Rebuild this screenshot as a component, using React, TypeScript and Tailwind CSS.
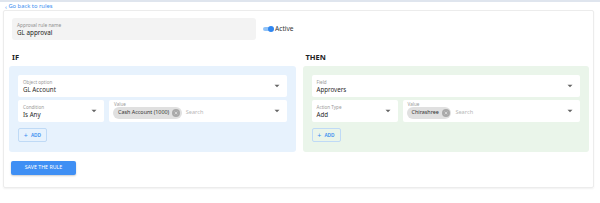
import React from "react";

const font = { fontFamily: '"Noto Sans", "Open Sans", sans-serif' };

function Chevron() {
  return (
    <svg width="6" height="4" viewBox="0 0 6 4" className="shrink-0">
      <path d="M0.5 0.8 L3 3.3 L5.5 0.8 Z" fill="#666" />
    </svg>
  );
}

function Field({ label, value, className }: { label: string; value: React.ReactNode; className?: string }) {
  return (
    <div className={"h-[22px] bg-white rounded-[2px] flex items-center pl-[5px] pr-[7px] " + (className || "")}>
      <div className="flex-1 flex flex-col justify-center min-w-0">
        <div className="text-[4.6px] leading-[6px] text-[#9a9a9a]">{label}</div>
        <div className="text-[6.2px] leading-[9px] text-[#2a2a2a]">{value}</div>
      </div>
      <Chevron />
    </div>
  );
}

function Chip({ text }: { text: string }) {
  return (
    <div className="h-[12px] rounded-full bg-[#e0e0e0] flex items-center pl-[5px] pr-[1.5px] gap-[3px]">
      <span className="text-[5.4px] text-[#333] leading-none whitespace-nowrap">{text}</span>
      <span className="w-[8px] h-[8px] rounded-full bg-[#a9a9a9] flex items-center justify-center">
        <svg width="4" height="4" viewBox="0 0 4 4">
          <path d="M0.7 0.7 L3.3 3.3 M3.3 0.7 L0.7 3.3" stroke="#e0e0e0" strokeWidth="0.8" />
        </svg>
      </span>
    </div>
  );
}

function ChipField({ chip }: { chip: string }) {
  return (
    <div className="flex-1 h-[22px] bg-white rounded-[2px] flex items-center pl-[4px] pr-[7px]">
      <div className="flex-1 flex flex-col justify-center min-w-0">
        <div className="text-[4.6px] leading-[5px] text-[#9a9a9a] pl-[1px] mt-[-1px]">Value</div>
        <div className="flex items-center gap-[4px]">
          <Chip text={chip} />
          <span className="text-[5.6px] text-[#b8b8b8] leading-none">Search</span>
        </div>
      </div>
      <Chevron />
    </div>
  );
}

function AddBtn() {
  return (
    <div className="w-[29px] h-[14px] border border-[#bfdaf6] rounded-[2px] flex items-center justify-center gap-[3px] text-[#3a8ef0]">
      <span className="text-[7px] leading-none">+</span>
      <span className="text-[4.8px] leading-none font-semibold">ADD</span>
    </div>
  );
}

function Panel({
  bg,
  top,
  left,
  chip,
}: {
  bg: string;
  top: [string, string];
  left: [string, string];
  chip: string;
}) {
  return (
    <div className={"h-[86px] rounded-[3px] pt-[9px] px-[9px] flex flex-col " + bg}>
      <Field label={top[0]} value={top[1]} />
      <div className="flex gap-[5px] mt-[3px]">
        <Field label={left[0]} value={left[1]} className="w-[86px]" />
        <ChipField chip={chip} />
      </div>
      <div className="mt-[6px]">
        <AddBtn />
      </div>
    </div>
  );
}

export default function App() {
  return (
    <div style={font} className="w-[600px] h-[203px] bg-white relative overflow-hidden">
      <div className="h-[1.5px] bg-[#dfe5ee]" />
      <div className="flex items-center pl-[5px] h-[7px] mt-[1.5px] text-[#3d8ef0] text-[5.8px] leading-none">
        <span className="mr-[1.5px] text-[6px]">‹</span>
        <span>Go back to rules</span>
      </div>
      <div className="ml-[3px] mt-[0px] w-[591px] h-[178px] border border-[#ececec] rounded-[2px] shadow-[0_1px_2px_rgba(0,0,0,0.06)] pt-[7px] pl-[5px] pr-[4px]">
        <div className="flex items-center">
          <div className="ml-[3px] w-[244px] h-[22px] bg-[#f3f3f3] rounded-[3px] pl-[5px] flex flex-col justify-center">
            <div className="text-[4.8px] leading-[6px] text-[#8f8f8f]">Approval rule name</div>
            <div className="text-[6.3px] leading-[9px] text-[#222]">GL approval</div>
          </div>
          <div className="ml-[7px] flex items-center">
            <div className="relative w-[11px] h-[6px]">
              <div className="absolute left-0 top-[1px] w-[10px] h-[4px] rounded-full bg-[#90c2f7]" />
              <div className="absolute right-0 top-0 w-[6px] h-[6px] rounded-full bg-[#2f86f0]" />
            </div>
            <span className="ml-[1px] text-[6.6px] text-[#333] leading-none">Active</span>
          </div>
        </div>
        <div className="flex gap-[7px] mt-[12px]">
          <div className="flex-1">
            <div className="h-[10px] pl-[3px] text-[7.5px] font-bold text-[#222] leading-[10px]">IF</div>
            <div className="mt-[4px]">
              <Panel
                bg="bg-[#e7f2fd]"
                top={["Object option", "GL Account"]}
                left={["Condition", "Is Any"]}
                chip="Cash Account (1000)"
              />
            </div>
          </div>
          <div className="flex-1">
            <div className="h-[10px] pl-[3px] text-[7.5px] font-bold text-[#222] leading-[10px]">THEN</div>
            <div className="mt-[4px]">
              <Panel
                bg="bg-[#eaf5ea]"
                top={["Field", "Approvers"]}
                left={["Action Type", "Add"]}
                chip="Chirashree"
              />
            </div>
          </div>
        </div>
        <div className="mt-[9px] ml-[2px] w-[65px] h-[14px] bg-[#3f8ff4] rounded-[2px] shadow-[0_1px_2px_rgba(0,0,0,0.2)] flex items-center justify-center text-white text-[5.3px] leading-none">
          SAVE THE RULE
        </div>
      </div>
    </div>
  );
}
